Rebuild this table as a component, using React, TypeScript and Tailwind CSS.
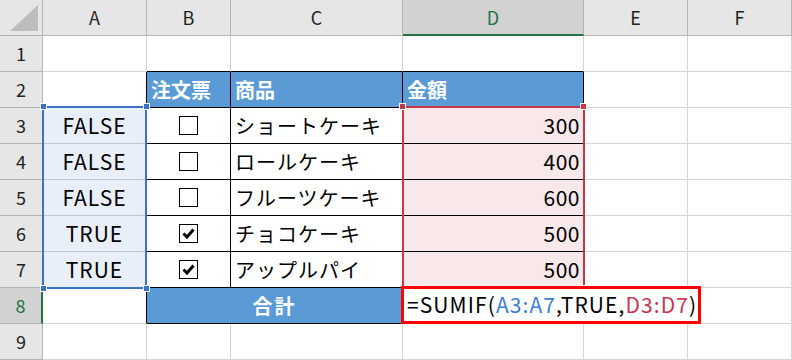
import React from 'react'

type Row = { n: number; flag: string; checked: boolean; item: string; price: number }

const rows: Row[] = [
  { n: 3, flag: 'FALSE', checked: false, item: 'ショートケーキ', price: 300 },
  { n: 4, flag: 'FALSE', checked: false, item: 'ロールケーキ', price: 400 },
  { n: 5, flag: 'FALSE', checked: false, item: 'フルーツケーキ', price: 600 },
  { n: 6, flag: 'TRUE', checked: true, item: 'チョコケーキ', price: 500 },
  { n: 7, flag: 'TRUE', checked: true, item: 'アップルパイ', price: 500 },
]

const colHead = 'flex items-center justify-center bg-[#e6e6e6] border-r border-b border-[#b4b4b4] text-[18px] text-[#222]'
const rowHead = 'flex items-center justify-center bg-[#e6e6e6] border-r border-b border-[#b4b4b4] text-[18px] text-[#222]'
const cell = 'border-r border-b border-[#d4d4d4]'
const blueHead = 'flex items-center bg-[#5b9bd5] border-r border-b border-black pl-1 text-[20px] font-bold text-white'

const CheckBox = ({ checked }: { checked: boolean }) => (
  <div className="flex h-[19px] w-[19px] items-center justify-center border border-black bg-white">
    {checked && (
      <svg width="13" height="11" viewBox="0 0 13 11">
        <path d="M1.5 5.5 L5 9 L11.5 1.5" fill="none" stroke="#000" strokeWidth="3" />
      </svg>
    )}
  </div>
)

const Handle = ({ className }: { className: string }) => (
  <div className={`absolute h-[7px] w-[7px] border border-white ${className}`} />
)

export default function App() {
  return (
    <div className="relative h-[360px] w-[792px] overflow-hidden bg-white font-['Noto_Sans_CJK_JP',sans-serif] text-black">
      <div className="grid grid-cols-[43px_104px_84px_172px_181px_104px_104px] grid-rows-[repeat(10,36px)]">
        {/* column headers */}
        <div className="relative bg-[#e6e6e6] border-r border-b border-[#b4b4b4]">
          <svg className="absolute right-[4px] bottom-[4px]" width="28" height="26" viewBox="0 0 28 26">
            <polygon points="28,0 28,26 0,26" fill="#bdbdbd" />
          </svg>
        </div>
        <div className={colHead}>A</div>
        <div className={colHead}>B</div>
        <div className={colHead}>C</div>
        <div className="flex items-center justify-center bg-[#d2d2d2] border-r border-[#b4b4b4] border-b-2 border-b-[#217346] text-[18px] text-[#217346]">D</div>
        <div className={colHead}>E</div>
        <div className={colHead}>F</div>

        {/* row 1 */}
        <div className={rowHead}>1</div>
        <div className={cell} />
        <div className="border-r border-[#d4d4d4] border-b border-b-black" />
        <div className="border-r border-[#d4d4d4] border-b border-b-black" />
        <div className="border-r border-[#d4d4d4] border-b border-b-black" />
        <div className={cell} />
        <div className={cell} />

        {/* row 2 */}
        <div className={rowHead}>2</div>
        <div className="border-b border-[#d4d4d4] border-r border-r-black" />
        <div className={blueHead}>注文票</div>
        <div className={blueHead}>商品</div>
        <div className={blueHead}>金額</div>
        <div className={cell} />
        <div className={cell} />

        {rows.map((r) => (
          <React.Fragment key={r.n}>
            <div className={rowHead}>{r.n}</div>
            <div className="flex items-center justify-center bg-[#e8eff9] border-b border-[#c6c6c6] border-r border-r-black text-[21px] tracking-[1px]">
              {r.flag}
            </div>
            <div className="flex items-center justify-center border-r border-b border-black">
              <CheckBox checked={r.checked} />
            </div>
            <div className="flex items-center border-r border-b border-black pl-1 text-[20px] tracking-[1px]">
              {r.item}
            </div>
            <div className="flex items-center justify-end bg-[#f8e8e9] border-r border-b border-black pr-[3px] text-[21px] tracking-[0.5px]">
              {r.price}
            </div>
            <div className={cell} />
            <div className={cell} />
          </React.Fragment>
        ))}

        {/* row 8 */}
        <div className="flex items-center justify-center bg-[#d2d2d2] border-b border-[#b4b4b4] border-r-2 border-r-[#217346] text-[18px] text-[#217346]">8</div>
        <div className="border-b border-[#d4d4d4] border-r border-r-black" />
        <div className="col-span-2 flex items-center justify-center bg-[#5b9bd5] border-r border-b border-black text-[20px] font-bold tracking-[2px] text-white">
          合計
        </div>
        <div className="relative border-b border-[#d4d4d4]">
          <div className="absolute left-[-2px] top-[-2px] z-10 flex h-[38px] w-[300px] items-center border-[3px] border-[#ff0000] bg-white pl-[3px] text-[21px] tracking-[1.1px] whitespace-nowrap">
            <span>=SUMIF(</span>
            <span className="text-[#3f7fd0]">A3:A7</span>
            <span>,TRUE,</span>
            <span className="text-[#c8364f]">D3:D7</span>
            <span>)</span>
          </div>
        </div>
        <div className={cell} />
        <div className={cell} />

        {/* row 9 */}
        <div className={rowHead}>9</div>
        <div className={cell} />
        <div className={cell} />
        <div className={cell} />
        <div className={cell} />
        <div className={cell} />
        <div className={cell} />
      </div>

      {/* selection on A3:A7 */}
      <div className="absolute left-[42px] top-[106px] h-[183px] w-[105px] border-2 border-[#3a72c6]" />
      <Handle className="left-[40px] top-[103px] bg-[#3a72c6]" />
      <Handle className="left-[143px] top-[103px] bg-[#3a72c6]" />
      <Handle className="left-[40px] top-[285px] bg-[#3a72c6]" />
      <Handle className="left-[143px] top-[285px] bg-[#3a72c6]" />

      {/* selection on D3:D7 */}
      <div className="absolute left-[402px] top-[106px] h-[183px] w-[183px] border-2 border-[#c4384a]" />
      <Handle className="left-[399px] top-[103px] bg-[#c4384a]" />
      <Handle className="left-[580px] top-[103px] bg-[#c4384a]" />
      <Handle className="left-[580px] top-[285px] bg-[#c4384a]" />
    </div>
  )
}
